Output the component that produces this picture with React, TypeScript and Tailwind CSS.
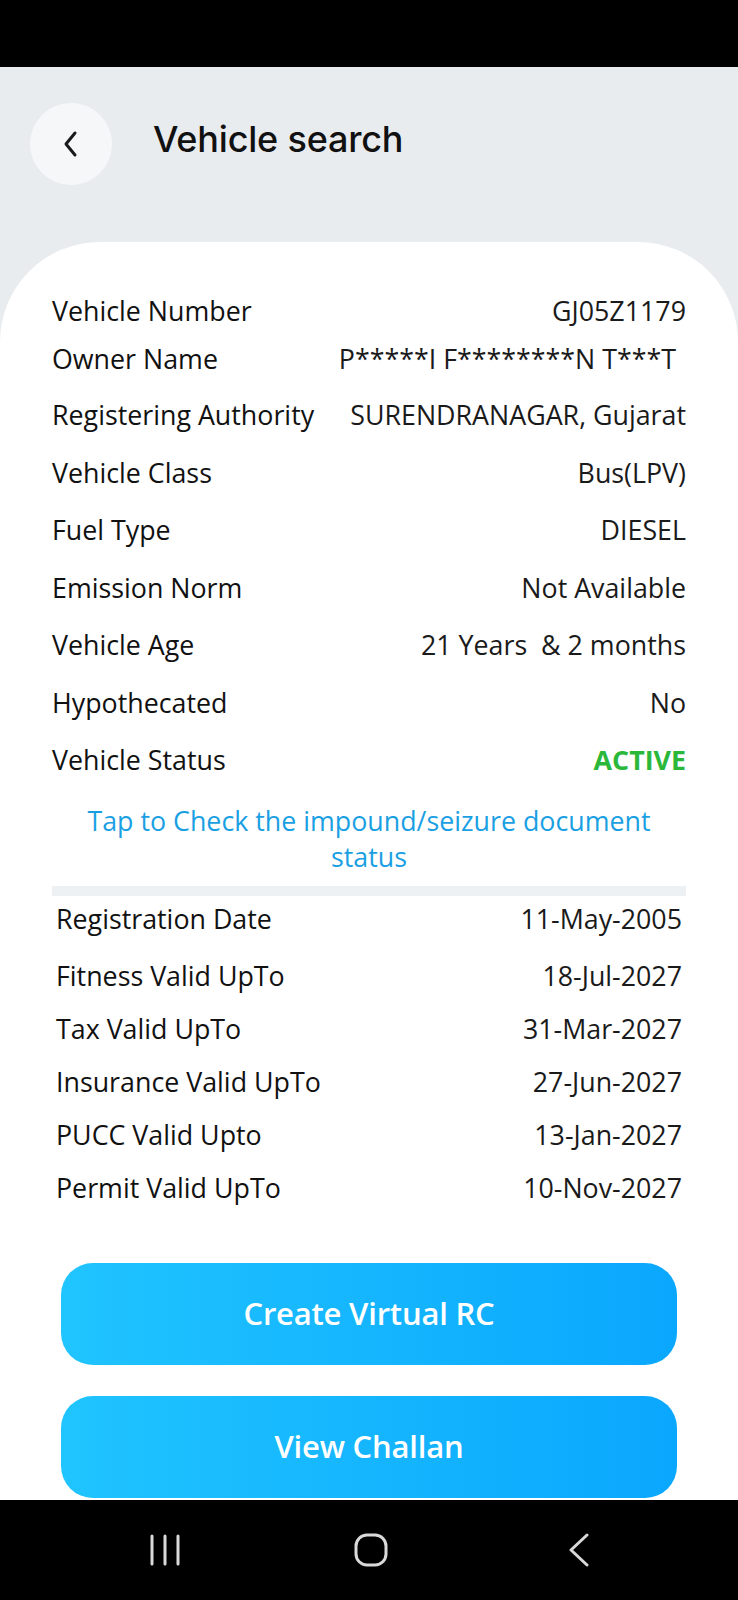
import React from "react";

const font = { fontFamily: '"Open Sans", "Noto Sans", sans-serif' };

function Row({ label, value, className = "", valueClass = "" }: { label: string; value: string; className?: string; valueClass?: string }) {
  return (
    <div className={`flex items-center justify-between ${className}`}>
      <span className="text-[26.8px] leading-none text-[#111]">{label}</span>
      <span className={`text-[26.8px] leading-none text-[#1a1a1a] ${valueClass}`}>{value}</span>
    </div>
  );
}

export default function App() {
  return (
    <div className="relative w-[738px] h-[1600px] overflow-hidden bg-[#e9ecef]" style={font}>
      {/* status bar */}
      <div className="h-[67px] bg-black" />
      {/* header */}
      <div className="h-[175px] flex items-start pt-[36px] pl-[30px]">
        <div className="w-[82px] h-[82px] rounded-full bg-[#f6f7f9] flex items-center justify-center">
          <svg width="20" height="28" viewBox="0 0 20 28" fill="none">
            <path d="M14 3 L5 14 L14 25" stroke="#1a1a1a" strokeWidth="3" strokeLinecap="round" strokeLinejoin="round" />
          </svg>
        </div>
        <div className="ml-[41px] mt-[18px] text-[36px] leading-none font-medium text-[#111] tracking-[-0.2px]" style={{ fontFamily: 'Inter, "Noto Sans", sans-serif' }}>
          Vehicle search
        </div>
      </div>
      {/* card */}
      <div className="bg-white rounded-t-[100px] h-[1258px] pt-[45px] px-[52px]">
        <Row label="Vehicle Number" value="GJ05Z1179" className="h-[48px]" />
        <Row label="Owner Name" value="P*****I F********N T***T" className="h-[48px]" valueClass="mr-[10px]" />
        <div className="h-[4px]" />
        <Row label="Registering Authority" value="SURENDRANAGAR, Gujarat" className="h-[57.5px]" />
        <Row label="Vehicle Class" value="Bus(LPV)" className="h-[57.5px]" />
        <Row label="Fuel Type" value="DIESEL" className="h-[57.5px]" />
        <Row label="Emission Norm" value="Not Available" className="h-[57.5px]" />
        <Row label="Vehicle Age" value="21 Years  & 2 months" className="h-[57.5px]" valueClass="whitespace-pre" />
        <Row label="Hypothecated" value="No" className="h-[57.5px]" />
        <Row label="Vehicle Status" value="ACTIVE" className="h-[57.5px]" valueClass="!text-[#2bb83a] font-bold" />
        <div className="mt-[13px] -mx-[10px] text-center text-[26.8px] leading-[36px] text-[#1b9fe3]">
          Tap to Check the impound/seizure document
          <br />
          status
        </div>
        <div className="mt-[11px] h-[10px] bg-[#edf1f4]" />
        <div className="px-[4px]">
          <Row label="Registration Date" value="11-May-2005" className="h-[54px] pb-[6px]" />
          <Row label="Fitness Valid UpTo" value="18-Jul-2027" className="h-[53px]" />
          <Row label="Tax Valid UpTo" value="31-Mar-2027" className="h-[53px]" />
          <Row label="Insurance Valid UpTo" value="27-Jun-2027" className="h-[53px]" />
          <Row label="PUCC Valid Upto" value="13-Jan-2027" className="h-[53px]" />
          <Row label="Permit Valid UpTo" value="10-Nov-2027" className="h-[53px]" />
        </div>
        <div className="mt-[48px] px-[9px] flex flex-col gap-[31px]">
          <button className="h-[102px] rounded-[32px] bg-gradient-to-r from-[#20c4fe] to-[#0aa7fe] text-white text-[31px] font-semibold tracking-[-0.2px]">
            Create Virtual RC
          </button>
          <button className="h-[102px] rounded-[32px] bg-gradient-to-r from-[#20c4fe] to-[#0aa7fe] text-white text-[31px] font-semibold tracking-[-0.2px]">
            View Challan
          </button>
        </div>
      </div>
      {/* nav bar */}
      <div className="absolute left-0 bottom-0 w-full h-[100px] bg-black flex items-center pl-[150px]">
        <svg width="30" height="32" viewBox="0 0 30 32" fill="none">
          <path d="M2 2 V30 M15 2 V30 M28 2 V30" stroke="#d9d9d9" strokeWidth="3" strokeLinecap="round" />
        </svg>
        <svg width="34" height="34" viewBox="0 0 34 34" fill="none" className="ml-[174px]">
          <rect x="2" y="2" width="30" height="30" rx="11" stroke="#d9d9d9" strokeWidth="3" />
        </svg>
        <svg width="22" height="34" viewBox="0 0 22 34" fill="none" className="ml-[180px]">
          <path d="M19 2 L3 17 L19 32" stroke="#d9d9d9" strokeWidth="3" strokeLinecap="round" strokeLinejoin="round" />
        </svg>
      </div>
    </div>
  );
}
